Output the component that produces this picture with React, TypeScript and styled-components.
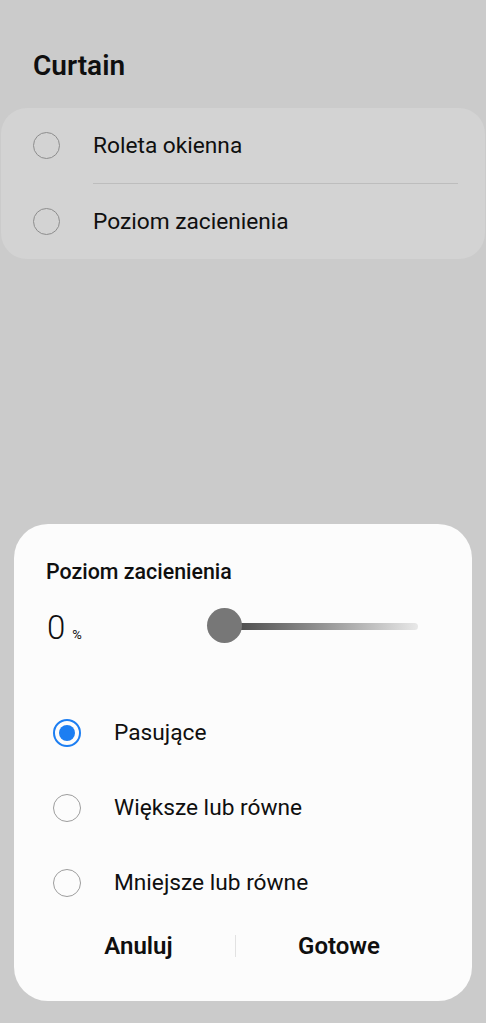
import React, { useState } from "react";
import styled, { createGlobalStyle } from "styled-components";

const colors = {
    page: "#cbcbcb",
    card: "#d3d3d3",
    sheet: "#fcfcfc",
    text: "#0f0f0f",
    ring: "#8d8d8d",
    ringLight: "#9d9d9d",
    blue: "#1c7ef2",
    divider: "#bdbdbd",
};

const GlobalStyle = createGlobalStyle`
  html, body {
    margin: 0;
    padding: 0;
    background: ${colors.page};
    font-family: Roboto, "Noto Sans", "Liberation Sans", sans-serif;
    color: ${colors.text};
  }
`;

const Screen = styled.div`
  height: 1023px;
  display: flex;
  flex-direction: column;
  box-sizing: border-box;
`;

const PageTitle = styled.h1`
  margin: 0;
  padding: 48px 33px 0;
  height: 108px;
  box-sizing: border-box;
  font-size: 28px;
  line-height: 36px;
  font-weight: 600;
`;

const ListCard = styled.div`
  margin: 0 1px;
  background: ${colors.card};
  border-radius: 26px;
  display: flex;
  flex-direction: column;
`;

const ListRow = styled.div`
  height: 75px;
  display: flex;
  align-items: center;
  gap: 33px;
  padding-left: 32px;
`;

const RowDivider = styled.div`
  height: 1px;
  margin: 0 27px 0 92px;
  background: ${colors.divider};
`;

const RadioCircle = styled.span<{ $checked?: boolean; $light?: boolean; $size: number }>`
  width: ${(p) => p.$size}px;
  height: ${(p) => p.$size}px;
  box-sizing: border-box;
  border-radius: 50%;
  flex-shrink: 0;
  border: ${(p) => (p.$checked ? `2px solid ${colors.blue}` : `1.5px solid ${p.$light ? colors.ringLight : colors.ring}`)};
  display: flex;
  align-items: center;
  justify-content: center;

  &::after {
    content: "";
    display: ${(p) => (p.$checked ? "block" : "none")};
    width: 16px;
    height: 16px;
    border-radius: 50%;
    background: ${colors.blue};
  }
`;

const RowLabel = styled.span`
  font-size: 22.7px;
  line-height: 28px;
  font-weight: 400;
`;

const Sheet = styled.div`
  margin: auto 14px 22px;
  height: 477px;
  box-sizing: border-box;
  background: ${colors.sheet};
  border-radius: 34px;
  padding: 34px 0 30px;
  display: flex;
  flex-direction: column;
`;

const SheetTitle = styled.div`
  padding-left: 32px;
  font-size: 21.4px;
  line-height: 28px;
  font-weight: 500;
`;

const ValueRow = styled.div`
  margin-top: 16px;
  height: 48px;
  display: flex;
  align-items: center;
  padding: 0 54px 0 33px;
`;

const Value = styled.div`
  width: 160px;
  display: flex;
  align-items: baseline;
  gap: 7px;
  padding-top: 4px;
`;

const ValueNumber = styled.span`
  font-size: 33px;
  font-weight: 300;
  line-height: 36px;
`;

const ValueUnit = styled.span`
  font-size: 13px;
  font-weight: 400;
`;

const Slider = styled.div`
  flex: 1;
  height: 36px;
  display: flex;
  align-items: center;
  position: relative;
`;

const Track = styled.div`
  flex: 1;
  height: 7px;
  margin-left: 16px;
  border-radius: 4px;
  background: linear-gradient(to right, #414141 0%, #8a8a8a 45%, #e8e8e8 100%);
`;

const Thumb = styled.div`
  position: absolute;
  left: 0;
  top: 0;
  width: 35px;
  height: 35px;
  border-radius: 50%;
  background: #777777;
`;

const Options = styled.div`
  margin-top: 45px;
  display: flex;
  flex-direction: column;
`;

const OptionRow = styled.div`
  height: 75px;
  display: flex;
  align-items: center;
  gap: 33px;
  padding-left: 39px;
  cursor: pointer;
`;

const Actions = styled.div`
  margin-top: auto;
  height: 50px;
  display: grid;
  grid-template-columns: 193px 1px 206px;
  align-items: center;
  padding-left: 28px;
`;

const ActionButton = styled.button`
  background: none;
  border: none;
  padding: 0;
  font-family: inherit;
  font-size: 24px;
  font-weight: 600;
  color: ${colors.text};
  text-align: center;
`;

const ActionDivider = styled.div`
  height: 22px;
  background: #e2e2e2;
`;

const rows = ["Roleta okienna", "Poziom zacienienia"];
const options = ["Pasujące", "Większe lub równe", "Mniejsze lub równe"];

const App = () => {
    const [selected, setSelected] = useState(0);

    return (
        <Screen>
            <GlobalStyle />
            <PageTitle>Curtain</PageTitle>
            <ListCard>
                {rows.map((row, i) => (
                    <React.Fragment key={row}>
                        {i > 0 && <RowDivider />}
                        <ListRow>
                            <RadioCircle $size={27} />
                            <RowLabel>{row}</RowLabel>
                        </ListRow>
                    </React.Fragment>
                ))}
            </ListCard>

            <Sheet>
                <SheetTitle>Poziom zacienienia</SheetTitle>
                <ValueRow>
                    <Value>
                        <ValueNumber>0</ValueNumber>
                        <ValueUnit>%</ValueUnit>
                    </Value>
                    <Slider>
                        <Track />
                        <Thumb />
                    </Slider>
                </ValueRow>
                <Options>
                    {options.map((option, i) => (
                        <OptionRow key={option} onClick={() => setSelected(i)}>
                            <RadioCircle $size={28} $light $checked={selected === i} />
                            <RowLabel>{option}</RowLabel>
                        </OptionRow>
                    ))}
                </Options>
                <Actions>
                    <ActionButton>Anuluj</ActionButton>
                    <ActionDivider />
                    <ActionButton>Gotowe</ActionButton>
                </Actions>
            </Sheet>
        </Screen>
    );
};

export default App;
